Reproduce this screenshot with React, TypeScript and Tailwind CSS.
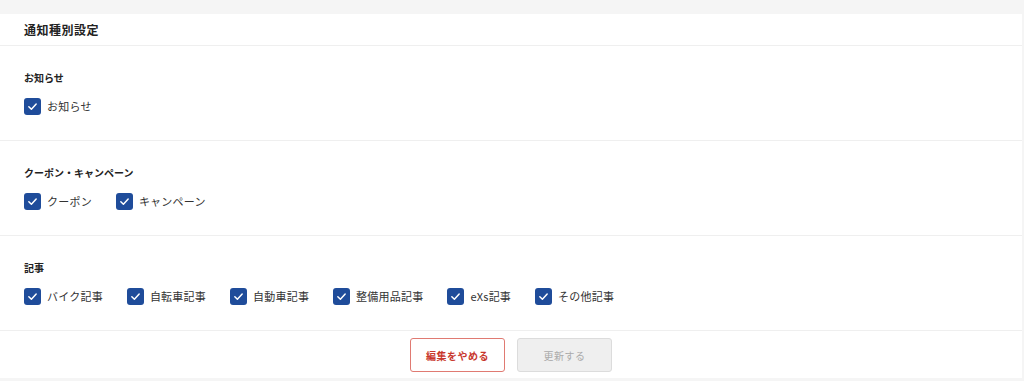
import React from "react";

const sections = [
  { title: "お知らせ", items: ["お知らせ"] },
  { title: "クーポン・キャンペーン", items: ["クーポン", "キャンペーン"] },
  { title: "記事", items: ["バイク記事", "自転車記事", "自動車記事", "整備用品記事", "eXs記事", "その他記事"] },
];

function CheckBox({ label }: { label: string }) {
  return (
    <label className="flex items-center gap-[6px] cursor-pointer">
      <span className="flex h-[17px] w-[17px] items-center justify-center rounded-[3px] bg-[#1f4c9a]">
        <svg width="11" height="11" viewBox="0 0 12 12" fill="none">
          <path d="M2 6.2 4.8 9 10 3.2" stroke="white" strokeWidth="1.6" strokeLinecap="round" strokeLinejoin="round" />
        </svg>
      </span>
      <span className="text-[11px] tracking-[0.02em] text-[#333]">{label}</span>
    </label>
  );
}

export default function App() {
  return (
    <div
      className="min-h-[381px] bg-[#f5f5f5] pt-[14px]"
      style={{ fontFamily: '"Noto Sans CJK JP", "Noto Sans", sans-serif' }}
    >
      <div className="mr-[2px] bg-white">
        <div className="flex h-[32px] items-center border-b border-[#efefef] px-6">
          <h1 className="text-[12px] font-bold tracking-[0.04em] text-[#222]">通知種別設定</h1>
        </div>

        {sections.map((s) => (
          <div key={s.title} className="h-[95px] border-b border-[#efefef] px-6 pt-[25px]">
            <h2 className="h-[14px] text-[10px] font-bold leading-[14px] text-[#222]">{s.title}</h2>
            <div className="mt-[13px] flex items-center gap-[24px]">
              {s.items.map((it) => (
                <CheckBox key={it} label={it} />
              ))}
            </div>
          </div>
        ))}

        <div className="flex h-[47px] items-start justify-center gap-3 pt-[7px]">
          <button className="h-[34px] w-[95px] rounded-[3px] border border-[#e07a72] bg-white text-[10px] font-bold tracking-[0.05em] text-[#c8372d]">
            編集をやめる
          </button>
          <button
            disabled
            className="h-[34px] w-[95px] rounded-[3px] border border-[#dcdcdc] bg-[#efefef] text-[10px] tracking-[0.05em] text-[#aaa]"
          >
            更新する
          </button>
        </div>
      </div>
    </div>
  );
}
